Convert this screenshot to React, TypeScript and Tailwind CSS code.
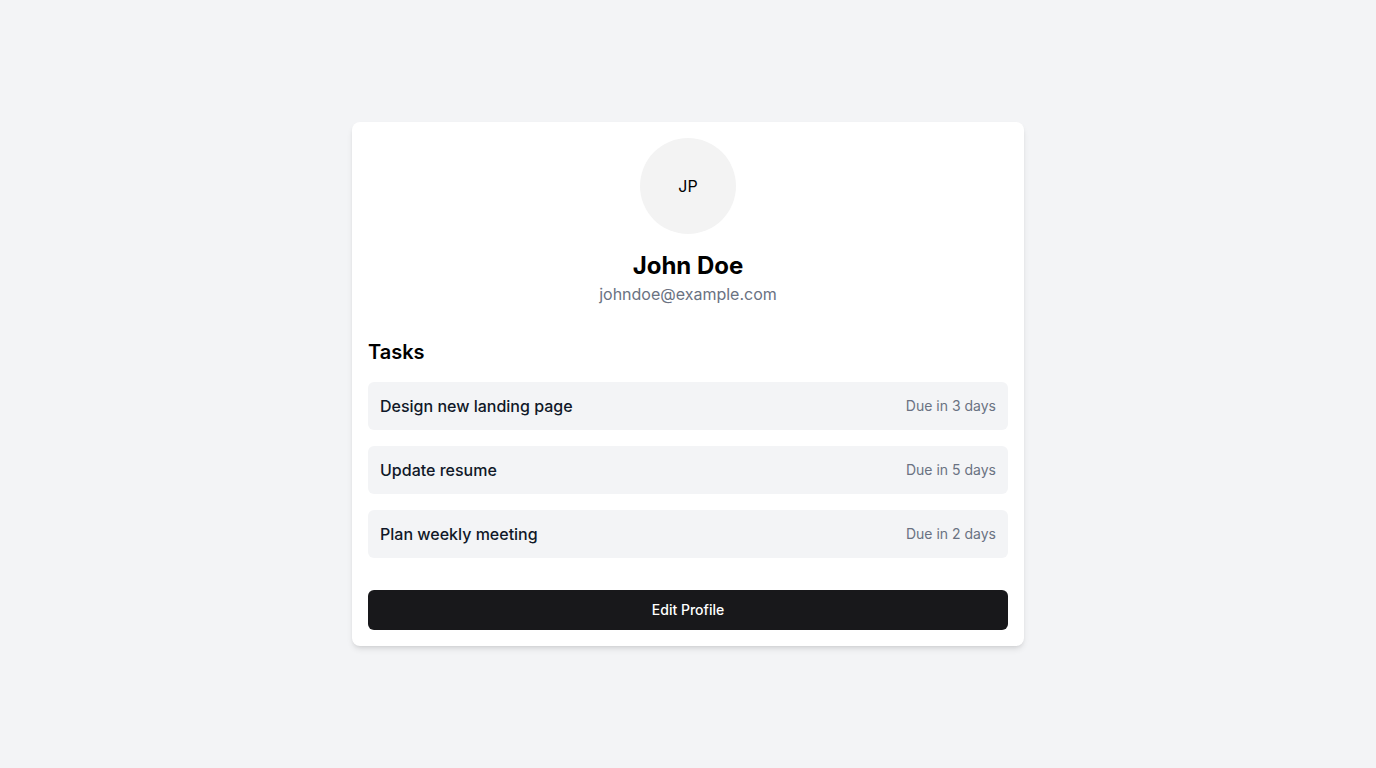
const tasks = [
  { title: 'Design new landing page', due: 'Due in 3 days' },
  { title: 'Update resume', due: 'Due in 5 days' },
  { title: 'Plan weekly meeting', due: 'Due in 2 days' },
];

export default function App() {
  return (
    <div className="min-h-screen bg-gray-100 flex items-center justify-center font-['Inter',sans-serif]">
      <div className="w-[672px] bg-white rounded-lg shadow-md p-4">
        <div className="flex flex-col items-center">
          <div className="w-24 h-24 rounded-full bg-[#f3f3f3] flex items-center justify-center text-base text-black">
            JP
          </div>
          <h1 className="mt-4 text-2xl font-bold text-black">John Doe</h1>
          <p className="text-base text-gray-500">johndoe@example.com</p>
        </div>

        <h2 className="mt-8 text-xl font-semibold text-black">Tasks</h2>
        <div className="mt-4 flex flex-col gap-4">
          {tasks.map((task) => (
            <div key={task.title} className="h-12 px-3 flex items-center justify-between bg-gray-100 rounded-md">
              <span className="text-base font-medium text-gray-900">{task.title}</span>
              <span className="text-sm text-gray-500">{task.due}</span>
            </div>
          ))}
        </div>

        <button className="mt-8 w-full h-10 rounded-md bg-[#18181b] text-white text-sm font-medium">
          Edit Profile
        </button>
      </div>
    </div>
  );
}
